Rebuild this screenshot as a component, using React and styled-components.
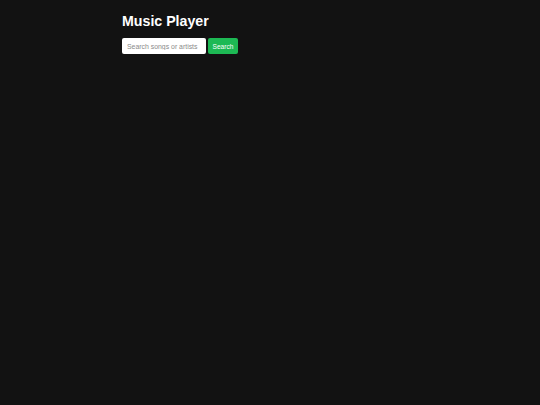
import React from "react";
import styled, { createGlobalStyle } from "styled-components";

const Global = createGlobalStyle`
  html, body { margin: 0; padding: 0; background: #121212; }
  body { font-family: "Liberation Sans", Arial, sans-serif; color: #fff; min-height: 405px; }
`;

const Container = styled.div`
  width: 296px;
  margin: 0 auto;
  padding-top: 12px;
`;

const Title = styled.h1`
  margin: 0 0 8px;
  font-size: 14.2px;
  line-height: 18px;
  font-weight: 700;
  color: #fff;
`;

const SearchRow = styled.form`
  display: flex;
  gap: 2px;
  align-items: stretch;
`;

const Input = styled.input`
  width: 84px;
  height: 16px;
  box-sizing: border-box;
  border: none;
  border-radius: 2px;
  padding: 0 5px;
  font-family: "Liberation Sans", Arial, sans-serif;
  font-size: 6.9px;
  background: #fff;
  color: #000;
  outline: none;
  &::placeholder { color: #8a8a8a; }
`;

const Button = styled.button`
  width: 30px;
  height: 16px;
  border: none;
  border-radius: 2px;
  padding: 0;
  background: #1db954;
  color: #fff;
  font-family: "Liberation Sans", Arial, sans-serif;
  font-size: 6.6px;
  cursor: pointer;
`;

export default function App() {
  return (
    <>
      <Global />
      <Container>
        <Title>Music Player</Title>
        <SearchRow onSubmit={(e) => e.preventDefault()}>
          <Input placeholder="Search songs or artists" />
          <Button type="submit">Search</Button>
        </SearchRow>
      </Container>
    </>
  );
}
